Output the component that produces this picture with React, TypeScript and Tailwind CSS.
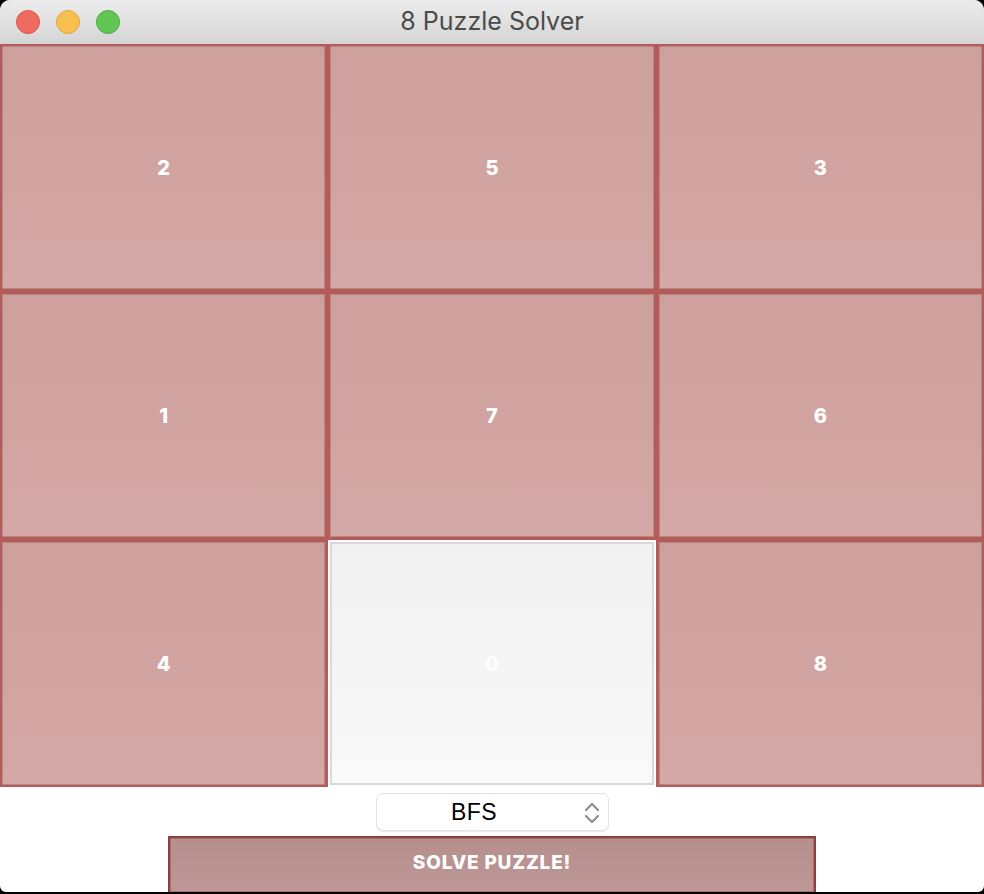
const tiles: number[] = [2, 5, 3, 1, 7, 6, 4, 0, 8];

const Tile = ({ value }: { value: number }) => {
  if (value === 0) {
    return (
      <div className="bg-white p-[2px] h-full">
        <div className="h-full border-2 border-[#d9d9d9] bg-linear-to-b from-[#f1f1f1] to-[#f9f9f9] flex items-center justify-center text-white font-extrabold text-[20px]">
          0
        </div>
      </div>
    );
  }
  return (
    <div className="h-full border-2 border-[#b65b58] shadow-[inset_0_0_0_1px_#b08987] bg-linear-to-b from-[#cd9f9d] to-[#d4a8a6] flex items-center justify-center text-white font-extrabold text-[20px]">
      {value}
    </div>
  );
};

const App = () => {
  return (
    <div className="w-[984px] h-[894px] bg-black overflow-hidden" style={{ fontFamily: 'Inter, sans-serif' }}>
      <div className="h-[892px] bg-white rounded-t-[10px] rounded-b-[6px] overflow-hidden flex flex-col">
        {/* title bar */}
        <div className="relative h-[44px] bg-linear-to-b from-[#ececec] to-[#d5d5d5] flex items-center justify-center shrink-0">
          <div className="absolute left-[16px] top-[10px] flex gap-[16px]">
            <div className="w-[24px] h-[24px] rounded-full bg-[#ef6b5f] border border-[#d9534a]" />
            <div className="w-[24px] h-[24px] rounded-full bg-[#f6bf50] border border-[#dea43b]" />
            <div className="w-[24px] h-[24px] rounded-full bg-[#62c655] border border-[#50a943]" />
          </div>
          <span className="text-[25px] text-[#4b4b4b]">8 Puzzle Solver</span>
        </div>

        {/* board */}
        <div className="grid grid-cols-3 grid-rows-[247px_247px_247px] gap-px bg-[#b65b58]">
          {tiles.map((t, i) => (
            <Tile key={i} value={t} />
          ))}
        </div>

        {/* controls */}
        <div className="flex flex-col items-center pt-[6px]">
          <div className="relative w-[233px] h-[38px] rounded-[7px] border border-[#e3e3e3] shadow-[0_1px_1px_rgba(0,0,0,0.08)] bg-white flex items-center justify-center">
            <span className="text-[23px] tracking-[0.5px] text-black -ml-[36px]" style={{ fontFamily: '"Liberation Sans", Arial, sans-serif' }}>
              BFS
            </span>
            <svg className="absolute right-[7px] top-[7px]" width="18" height="24" viewBox="0 0 18 24" fill="none" stroke="#8e8e8e" strokeWidth="2.2" strokeLinecap="round" strokeLinejoin="round">
              <path d="M3 9 L9 3 L15 9" />
              <path d="M3 15 L9 21 L15 15" />
            </svg>
          </div>
          <div className="mt-[5px] w-[648px] h-[58px] border-2 border-[#8d3f3b] shadow-[inset_0_0_0_1px_#a27472] bg-linear-to-b from-[#b68f8d] to-[#bd9896] flex items-center justify-center pb-[4px]">
            <span className="text-white font-extrabold text-[19px] tracking-[0.8px]">SOLVE PUZZLE!</span>
          </div>
        </div>
      </div>
    </div>
  );
};

export default App;
